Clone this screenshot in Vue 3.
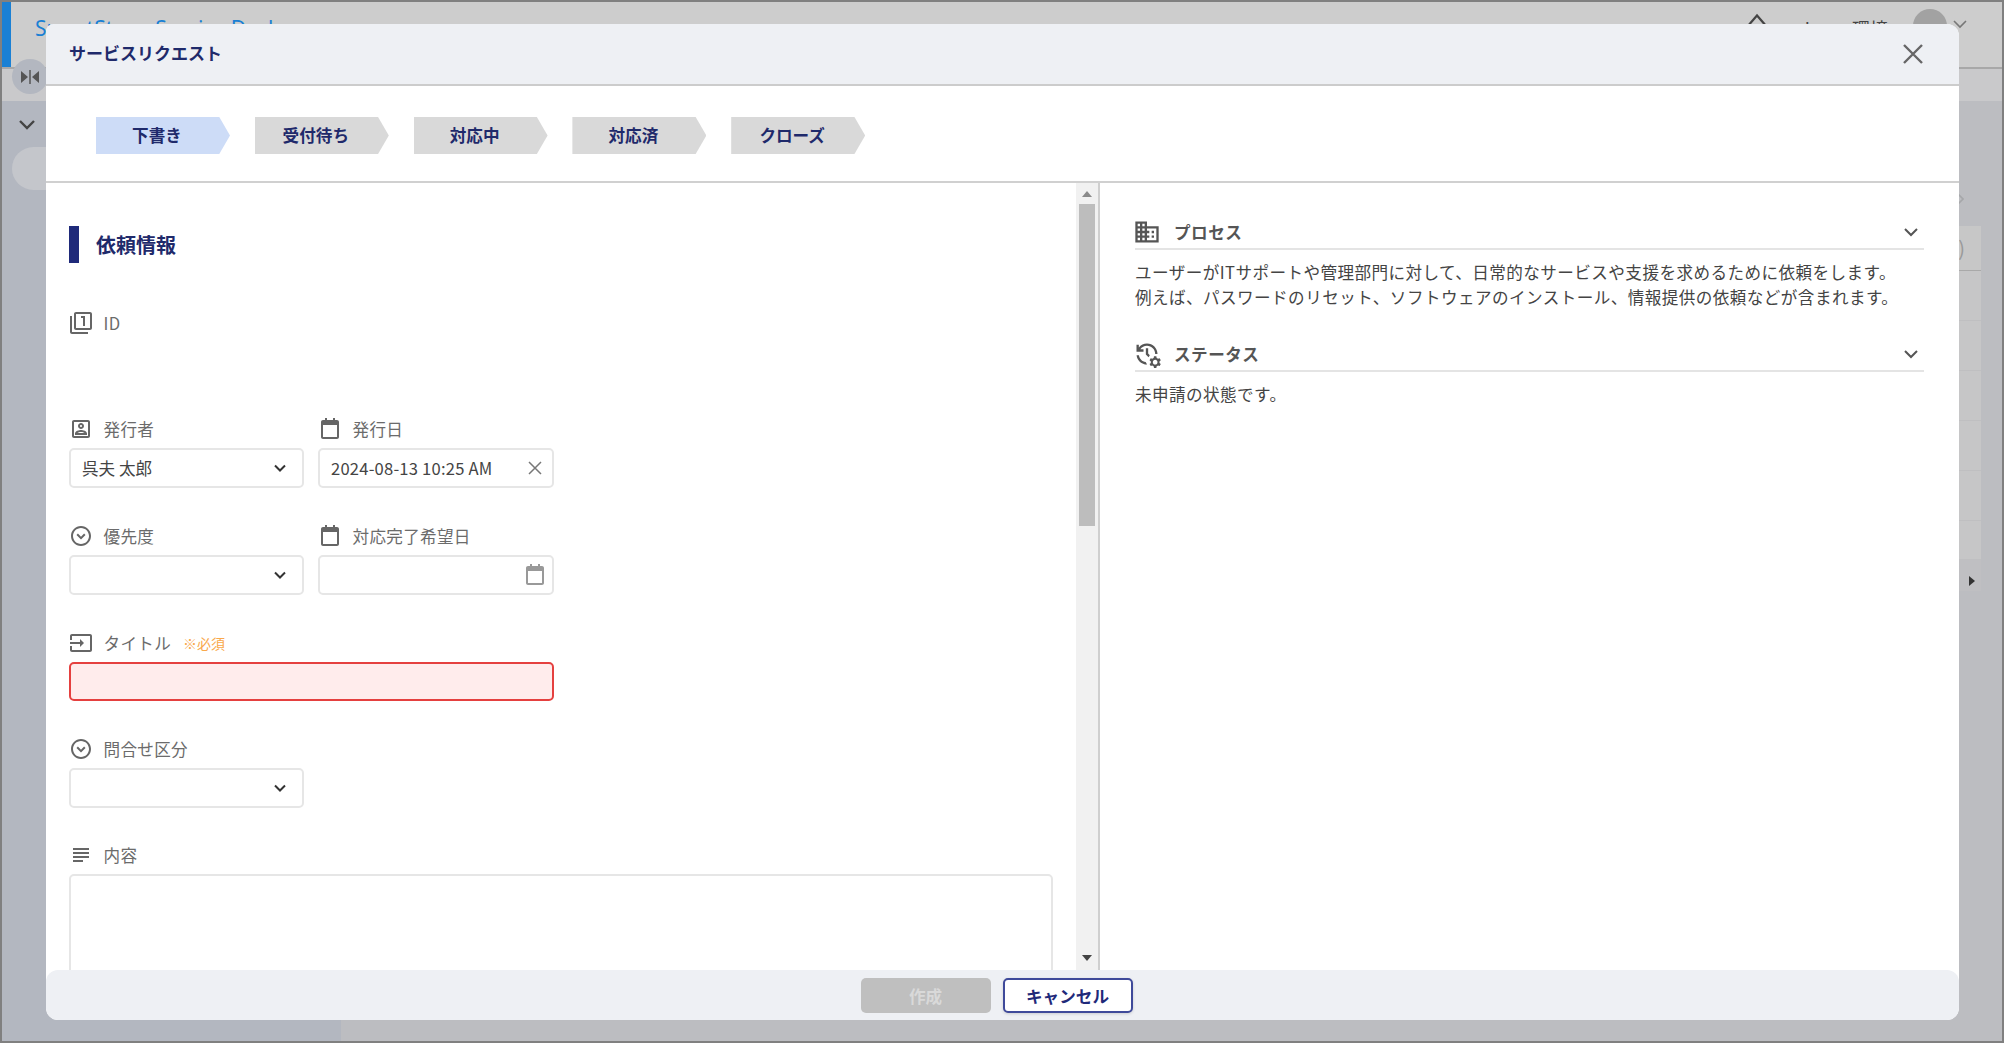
<script setup>
const steps = [
  { name: '下書き', active: true },
  { name: '受付待ち' },
  { name: '対応中' },
  { name: '対応済' },
  { name: 'クローズ' },
]
const rows = [1, 2, 3, 4, 5]
const icons = {
  filter: 'M3 5H1v16c0 1.1.9 2 2 2h16v-2H3V5zm11 10h2V5h-4v2h2v8zm7-14H7c-1.1 0-2 .9-2 2v14c0 1.1.9 2 2 2h14c1.1 0 2-.9 2-2V3c0-1.1-.9-2-2-2zm0 16H7V3h14v14z',
  person: 'M19 5v14H5V5h14m0-2H5c-1.11 0-2 .9-2 2v14c0 1.1.89 2 2 2h14c1.1 0 2-.9 2-2V5c0-1.1-.9-2-2-2zm-7 9c-1.65 0-3-1.35-3-3s1.35-3 3-3 3 1.35 3 3-1.35 3-3 3zm0-4c-.55 0-1 .45-1 1s.45 1 1 1 1-.45 1-1-.45-1-1-1zm6 10H6v-1.53c0-2.5 3.97-3.58 6-3.58s6 1.08 6 3.58V18zm-9.69-2h7.38c-.69-.56-2.38-1.12-3.69-1.12s-3.01.56-3.69 1.12z',
  calendar: 'M7 1h2v2h6V1h2v2h2c1.1 0 2 .9 2 2v15c0 1.1-.9 2-2 2H5c-1.1 0-2-.9-2-2V5c0-1.1.9-2 2-2h2zM5 8v12h14V8z',
  circle: 'M12 2C6.48 2 2 6.48 2 12s4.48 10 10 10 10-4.48 10-10S17.52 2 12 2zm0 18c-4.41 0-8-3.59-8-8s3.59-8 8-8 8 3.59 8 8-3.59 8-8 8zm0-4.5L7.5 11l1.41-1.41L12 12.67l3.09-3.08L16.5 11 12 15.5z',
  input: 'M21 3.01H3c-1.1 0-2 .9-2 2V9h2V4.99h18v14.03H3V15H1v4.01c0 1.1.9 1.98 2 1.98h18c1.1 0 2-.88 2-1.98v-14c0-1.11-.9-2-2-2zM11 16l4-4-4-4v3H1v2h10v3z',
  subject: 'M14 17H4v2h10v-2zm6-8H4v2h16V9zM4 15h16v-2H4v2zM4 5v2h16V5H4z',
  domain: 'M12 7V3H2v18h20V7H12zM6 19H4v-2h2v2zm0-4H4v-2h2v2zm0-4H4V9h2v2zm0-4H4V5h2v2zm4 12H8v-2h2v2zm0-4H8v-2h2v2zm0-4H8V9h2v2zm0-4H8V5h2v2zm10 12h-8v-2h2v-2h-2v-2h2v-2h-2V9h8v10zm-2-8h-2v2h2v-2zm0 4h-2v2h2v-2z',
  history: 'M22.69 18.37l1.14-1-1-1.73-1.45.49c-.32-.27-.68-.48-1.08-.63L20 14h-2l-.3 1.49c-.4.15-.76.36-1.08.63l-1.45-.49-1 1.73 1.14 1c-.08.5-.08.76 0 1.26l-1.14 1 1 1.73 1.45-.49c.32.27.68.48 1.08.63L18 24h2l.3-1.49c.4-.15.76-.36 1.08-.63l1.45.49 1-1.73-1.14-1c.08-.51.08-.77 0-1.27zM19 21c-1.1 0-2-.9-2-2s.9-2 2-2 2 .9 2 2-.9 2-2 2zM11 7v5.41l2.36 2.36 1.04-1.79-1.4-1.39V7h-2zm10 5c0-4.97-4.03-9-9-9-2.83 0-5.35 1.32-7 3.36V4H3v6h6V8H6.26C7.53 6.19 9.63 5 12 5c3.86 0 7 3.14 7 7h2zm-10.14 6.91c-2.99-.49-5.35-2.9-5.78-5.91H3.06c.5 4.5 4.31 8 8.94 8h.07l-1.21-2.09z',
}
</script>

<template>
  <div class="page">
    <header class="topbar">
      <span class="brand-strip"></span>
      <span class="brand">SmartStage Service Desk</span>
      <span class="top-right">
        <svg class="top-icon" viewBox="0 0 24 24"><path d="M5 14 12 6l7 8v8H5z" fill="none" stroke="#444" stroke-width="2" /></svg>
        <span class="env">Japan環境</span>
        <span class="avatar"></span>
        <svg class="top-chev" viewBox="0 0 16 16"><path d="M2 5l6 6 6-6" fill="none" stroke="#777" stroke-width="1.6" /></svg>
      </span>
    </header>
    <div class="subbar">
      <span class="toggle">
        <svg viewBox="0 0 24 24" width="24" height="24"><path d="M3 6v12l7-6zM21 6v12l-7-6z" fill="#555" /><path d="M12 5v14" stroke="#555" stroke-width="1.5" /></svg>
      </span>
    </div>
    <div class="backdrop">
      <aside class="sidebar">
        <svg class="side-chev" viewBox="0 0 24 24" width="24" height="24"><path d="M5 8l7 7 7-7" fill="none" stroke="#444" stroke-width="2.4" /></svg>
        <span class="side-pill"></span>
      </aside>
      <main class="main">
        <div class="table">
          <svg class="table-chev" viewBox="0 0 8 14"><path d="M1 1l6 6-6 6" fill="none" stroke="#a6a7aa" stroke-width="1.6" /></svg>
          <div class="table-head">)</div>
          <div v-for="r in rows" :key="r" class="table-row"></div>
          <div class="table-row last"></div>
          <div class="table-foot"><span class="foot-arrow"></span></div>
        </div>
      </main>
    </div>

    <section class="modal">
      <div class="modal-head">
        <span class="modal-title">サービスリクエスト</span>
        <svg class="close" viewBox="0 0 20 20" width="20" height="20"><path d="M1 1l18 18M19 1 1 19" stroke="#666" stroke-width="2.4" fill="none" /></svg>
      </div>

      <div class="steps">
        <div v-for="s in steps" :key="s.name" class="step" :class="{ active: s.active }">{{ s.name }}</div>
      </div>

      <div class="modal-body">
        <div class="left">
          <div class="section"><span class="section-bar"></span>依頼情報</div>

          <div class="field id-field">
            <label class="label"><svg class="ico" viewBox="0 0 24 24"><path :d="icons.filter" /></svg>ID</label>
          </div>

          <div class="grid">
            <div class="field">
              <label class="label"><svg class="ico" viewBox="0 0 24 24"><path :d="icons.person" /></svg>発行者</label>
              <div class="control">
                <span>呉夫 太郎</span>
                <svg class="chev" viewBox="0 0 14 14"><path d="M2 4.5l5 5 5-5" fill="none" stroke="#333" stroke-width="2" /></svg>
              </div>
            </div>
            <div class="field">
              <label class="label"><svg class="ico" viewBox="0 0 24 24"><path fill-rule="evenodd" :d="icons.calendar" /></svg>発行日</label>
              <div class="control date">
                <span class="date-text">2024-08-13 10:25 AM</span>
                <svg class="clear" viewBox="0 0 14 14"><path d="M1 1l12 12M13 1 1 13" stroke="#777" stroke-width="1.5" fill="none" /></svg>
              </div>
            </div>
            <div class="field">
              <label class="label"><svg class="ico" viewBox="0 0 24 24"><path :d="icons.circle" /></svg>優先度</label>
              <div class="control">
                <span></span>
                <svg class="chev" viewBox="0 0 14 14"><path d="M2 4.5l5 5 5-5" fill="none" stroke="#333" stroke-width="2" /></svg>
              </div>
            </div>
            <div class="field">
              <label class="label"><svg class="ico" viewBox="0 0 24 24"><path fill-rule="evenodd" :d="icons.calendar" /></svg>対応完了希望日</label>
              <div class="control date">
                <span></span>
                <svg class="cal" viewBox="0 0 24 24"><path fill-rule="evenodd" :d="icons.calendar" /></svg>
              </div>
            </div>
            <div class="field wide">
              <label class="label"><svg class="ico" viewBox="0 0 24 24"><path :d="icons.input" /></svg>タイトル<span class="required">※必須</span></label>
              <div class="control error"></div>
            </div>
            <div class="field">
              <label class="label"><svg class="ico" viewBox="0 0 24 24"><path :d="icons.circle" /></svg>問合せ区分</label>
              <div class="control">
                <span></span>
                <svg class="chev" viewBox="0 0 14 14"><path d="M2 4.5l5 5 5-5" fill="none" stroke="#333" stroke-width="2" /></svg>
              </div>
            </div>
          </div>

          <div class="field">
            <label class="label"><svg class="ico" viewBox="0 0 24 24"><path :d="icons.subject" /></svg>内容</label>
            <div class="textarea"></div>
          </div>
        </div>

        <div class="scrollbar">
          <span class="arrow-up"></span>
          <span class="thumb"></span>
          <span class="arrow-down"></span>
        </div>

        <div class="right">
          <div class="acc-head">
            <svg class="acc-ico" viewBox="0 0 24 24"><path :d="icons.domain" /></svg>
            <span class="acc-title">プロセス</span>
            <svg class="acc-chev" viewBox="0 0 16 16"><path d="M2 5l6 6 6-6" fill="none" stroke="#555" stroke-width="2" /></svg>
          </div>
          <p class="acc-text">ユーザーがITサポートや管理部門に対して、日常的なサービスや支援を求めるために依頼をします。<br />例えば、パスワードのリセット、ソフトウェアのインストール、情報提供の依頼などが含まれます。</p>
          <div class="acc-head second">
            <svg class="acc-ico" viewBox="0 0 24 24"><path :d="icons.history" /></svg>
            <span class="acc-title">ステータス</span>
            <svg class="acc-chev" viewBox="0 0 16 16"><path d="M2 5l6 6 6-6" fill="none" stroke="#555" stroke-width="2" /></svg>
          </div>
          <p class="acc-text">未申請の状態です。</p>
        </div>
      </div>

      <footer class="modal-foot">
        <button class="btn disabled" type="button">作成</button>
        <button class="btn cancel" type="button">キャンセル</button>
      </footer>
    </section>
  </div>
</template>

<style>
html, body { margin: 0; background: #bcbdc1; }
</style>

<style scoped>
.page {
  position: relative;
  width: 2004px;
  height: 1043px;
  box-sizing: border-box;
  border: 2px solid #808080;
  display: flex;
  flex-direction: column;
  overflow: hidden;
  font-family: "Noto Sans CJK JP", "Noto Sans", sans-serif;
  font-size: 16.6px;
  color: #333;
}
.topbar {
  height: 67px;
  flex: none;
  box-sizing: border-box;
  background: #cdcdcd;
  border-bottom: 2px solid #a8a8a8;
  display: flex;
  align-items: flex-start;
}
.brand-strip { width: 9px; height: 65px; background: #1a80d4; flex: none; }
.brand {
  margin-left: 24px;
  margin-top: 9px;
  font-family: "Noto Sans", sans-serif;
  font-size: 21px;
  line-height: 34px;
  color: #1a80d4;
}
.top-right { margin-left: auto; display: flex; align-items: flex-start; }
.top-icon { width: 26px; height: 26px; margin-top: 7px; }
.env { margin-left: 42px; margin-top: 13px; font-size: 18px; line-height: 26px; color: #444; width: 76px; white-space: nowrap; display: flex; justify-content: flex-end; }
.avatar { margin: 7px 0 0 25px; width: 34px; height: 34px; border-radius: 50%; background: #a2a2a2; }
.top-chev { width: 16px; height: 16px; margin: 14px 34px 0 5px; }
.subbar { height: 32px; flex: none; background: #c9c9cb; position: relative; }
.toggle {
  position: absolute;
  left: 10px;
  top: -10px;
  width: 36px;
  height: 35px;
  border-radius: 50%;
  background: #b3b7c0;
  display: flex;
  align-items: center;
  justify-content: center;
}
.backdrop { flex: 1; display: flex; min-height: 0; }
.sidebar { width: 339px; flex: none; background: #b3b7c0; position: relative; }
.side-chev { position: absolute; left: 13px; top: 12px; }
.side-pill { position: absolute; left: 10px; top: 46px; width: 90px; height: 43px; border-radius: 22px; background: #c4c6cb; }
.main { flex: 1; background: #bcbdc1; display: flex; justify-content: flex-end; align-items: flex-start; padding: 125px 21px 0 0; }
.table { width: 300px; position: relative; }
.table-chev { position: absolute; right: 17px; top: -34px; width: 8px; height: 14px; }
.table-head { height: 44px; background: #c7c7c7; border-bottom: 1px solid #a9a9a9; color: #999; font-size: 20px; line-height: 44px; text-align: right; padding-right: 16px; }
.table-row { height: 49px; background: #c6c6c7; border-bottom: 1px solid #bfbfc1; }
.table-row.last { height: 38px; }
.table-foot { height: 31px; background: #bfbfc2; position: relative; }
.foot-arrow {
  position: absolute;
  right: 6px;
  top: 16px;
  border-left: 6px solid #333;
  border-top: 5px solid transparent;
  border-bottom: 5px solid transparent;
}

.modal {
  position: absolute;
  left: 44px;
  top: 22px;
  width: 1913px;
  height: 996px;
  background: #fff;
  border-radius: 8px 12px 12px 12px;
  display: flex;
  flex-direction: column;
  overflow: hidden;
}
.modal-head {
  height: 62px;
  flex: none;
  box-sizing: border-box;
  background: #eef0f4;
  border-bottom: 2px solid #cccccc;
  display: flex;
  align-items: center;
  justify-content: space-between;
  padding: 0 36px 3px 23px;
}
.modal-title { font-size: 17px; font-weight: 700; color: #1f2a6b; }
.close { margin-top: 3px; }
.steps {
  height: 97px;
  flex: none;
  box-sizing: border-box;
  border-bottom: 2px solid #d0d0d0;
  padding: 31px 0 0 50px;
  display: flex;
  gap: 24.8px;
}
.step {
  width: 134px;
  height: 37px;
  box-sizing: border-box;
  padding: 0 12px 2px 0;
  background: #d9d9d9;
  clip-path: polygon(0 0, 92% 0, 100% 50%, 92% 100%, 0 100%);
  display: flex;
  align-items: center;
  justify-content: center;
  font-weight: 700;
  color: #1f2a6b;
}
.step.active { background: #cddcf7; }

.modal-body { flex: 1; min-height: 0; display: flex; overflow: hidden; }
.left {
  width: 1030px;
  flex: none;
  box-sizing: border-box;
  padding: 43px 0 0 23px;
  overflow: hidden;
}
.section {
  display: flex;
  align-items: center;
  height: 37px;
  font-size: 20px;
  font-weight: 700;
  color: #1f2a6b;
}
.section-bar { width: 10px; height: 37px; background: #1f2a7a; margin-right: 17px; }
.id-field { margin: 48px 0 82px; }
.id-field .label { margin-bottom: 0; }
.grid {
  display: grid;
  grid-template-columns: 235px 236px;
  column-gap: 14px;
  row-gap: 36px;
  width: 485px;
  margin-bottom: 35px;
}
.wide { grid-column: 1 / -1; }
.label {
  display: flex;
  align-items: center;
  height: 24px;
  margin-bottom: 7px;
  color: #6b6b6b;
  white-space: nowrap;
  letter-spacing: 0.3px;
}
.ico { width: 24px; height: 24px; margin-right: 10.5px; fill: #666; flex: none; }
.required { margin-left: 12px; font-size: 14px; color: #f9a84a; letter-spacing: 0; }
.control {
  height: 40px;
  box-sizing: border-box;
  border: 2px solid #e6e6e6;
  border-radius: 5px;
  background: #fff;
  display: flex;
  align-items: center;
  justify-content: space-between;
  padding: 0 15px 0 11px;
  color: #444;
}
.control.date { padding-right: 10px; }
.date-text { letter-spacing: 0.2px; }
.control.error { border-color: #e5403f; background: #ffecec; height: 39px; }
.chev { width: 14px; height: 14px; }
.clear { width: 14px; height: 14px; margin-right: 0; }
.cal { width: 24px; height: 24px; fill: #999; margin-right: -5px; }
.textarea {
  width: 984px;
  height: 200px;
  box-sizing: border-box;
  border: 2px solid #e6e6e6;
  border-radius: 5px;
}
.scrollbar {
  width: 22px;
  flex: none;
  background: #f1f1f1;
  border-right: 2px solid #cfcfcf;
  display: flex;
  flex-direction: column;
  align-items: center;
  position: relative;
}
.arrow-up {
  margin-top: 8px;
  border-bottom: 6px solid #8a8a8a;
  border-left: 5px solid transparent;
  border-right: 5px solid transparent;
}
.thumb { width: 16px; height: 322px; margin-top: 7px; background: #bdbdbd; }
.arrow-down {
  position: absolute;
  bottom: 9px;
  border-top: 6px solid #444;
  border-left: 5px solid transparent;
  border-right: 5px solid transparent;
}
.right { flex: 1; box-sizing: border-box; padding: 35px 35px 0 35px; }
.acc-head {
  height: 32px;
  box-sizing: border-box;
  border-bottom: 2px solid #e4e4e4;
  display: flex;
  align-items: center;
  padding-bottom: 2px;
}
.acc-head.second { margin-top: 30px; }
.acc-ico { width: 28px; height: 28px; margin-left: -2px; fill: #555; flex: none; }
.acc-title { margin-left: 13px; font-weight: 700; color: #555; letter-spacing: 0.5px; }
.acc-chev { width: 16px; height: 16px; margin-left: auto; margin-right: 5px; }
.acc-text { margin: 10px 0 0; line-height: 25px; color: #444; letter-spacing: 0.42px; }

.modal-foot {
  height: 50px;
  flex: none;
  box-sizing: border-box;
  background: #eef0f4;
  border-radius: 12px;
  display: flex;
  justify-content: center;
  align-items: flex-start;
  gap: 12px;
  padding: 8px 12px 0 0;
  position: relative;
  z-index: 1;
}
.btn {
  width: 130px;
  height: 35px;
  box-sizing: border-box;
  border-radius: 5px;
  font-family: inherit;
  font-size: 16.6px;
  font-weight: 700;
  padding: 0;
}
.btn.disabled { background: #bfbfbf; border: none; color: #d9d9d9; }
.btn.cancel { background: #fff; border: 2px solid #3f4a9a; color: #1f2a7a; box-shadow: 0 1px 3px rgba(0, 0, 0, 0.15); }
</style>
